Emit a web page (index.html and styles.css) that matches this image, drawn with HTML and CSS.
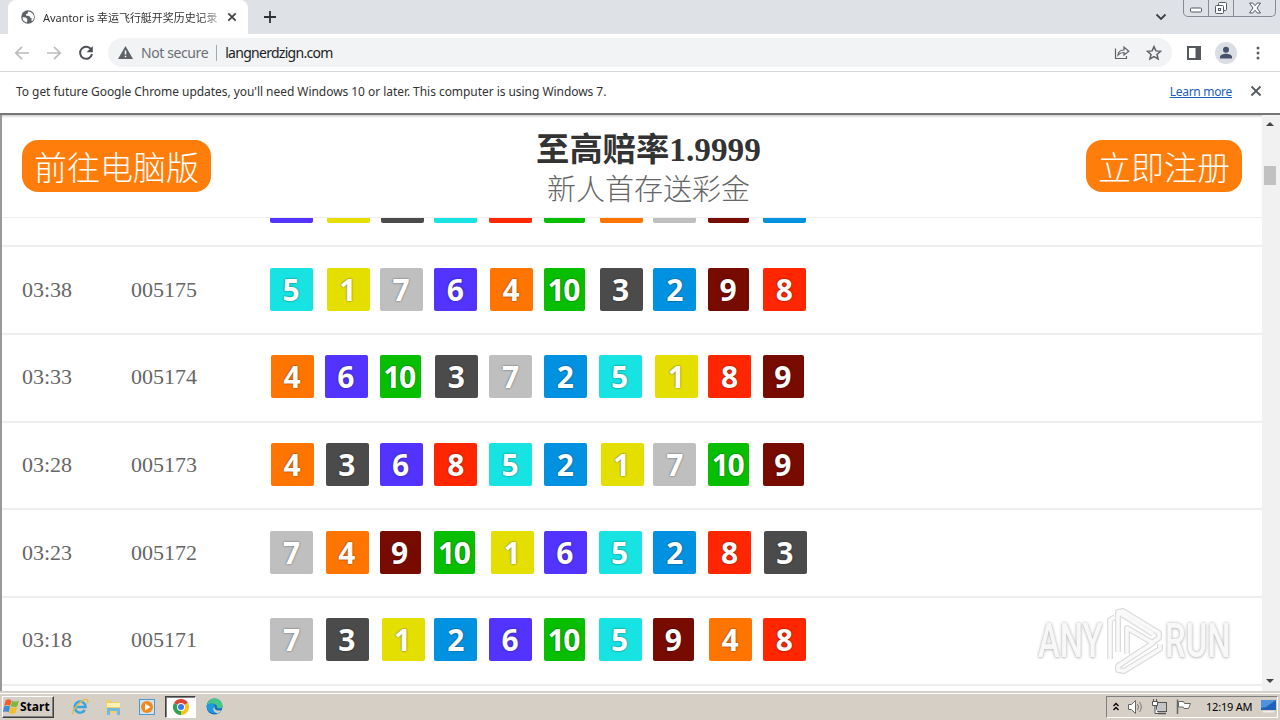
FILE: index.html
```html
<!DOCTYPE html>
<html lang="zh">
<head>
	<meta charset="UTF-8">
	<title>Avantor is 幸运飞行艇开奖历史记录</title>
	<link rel="stylesheet" href="styles.css">
</head>
<body>
	<div class="tabstrip">
		<div class="tab">
			<svg class="globe" width="14" height="14" viewBox="0 0 14 14"><circle cx="7" cy="7" r="6.8" fill="#5f6368"/><path d="M1.5 7.2l3.3.3 1.6 1.7-.5 3.3A5.6 5.6 0 0 1 1.5 7.2zM7 1.6l-.2 1.8-1.9.8.4 1.6 3 .2 1.1 1.8 1.2.2-.2 2.7 1.2.2A5.7 5.7 0 0 0 9.3 1.9z" fill="#fff"/></svg>
			<span class="tab-title">Avantor is 幸运飞行艇开奖历史记录</span>
			<svg width="10" height="10" viewBox="0 0 10 10"><path d="M1.3 1.3l7.4 7.4M8.7 1.3l-7.4 7.4" stroke="#3c4043" stroke-width="1.7"/></svg>
		</div>
		<svg class="plus" width="14" height="14" viewBox="0 0 14 14"><path d="M7 1v12M1 7h12" stroke="#2d3034" stroke-width="1.8"/></svg>
		<svg class="chevron" width="12" height="8" viewBox="0 0 12 8"><path d="M1.5 1.5L6 6l4.5-4.5" fill="none" stroke="#3c4043" stroke-width="1.8"/></svg>
		<div class="window-buttons">
			<span class="wb wb-min"><svg width="14" height="6" viewBox="0 0 14 6"><rect x="1.5" y="1" width="11" height="4" rx="1" fill="#fff" stroke="#555a66"/></svg></span>
			<span class="wb wb-max"><svg width="14" height="14" viewBox="0 0 14 14"><rect x="4.5" y="1.5" width="8" height="8" rx="1" fill="#fff" stroke="#555a66"/><rect x="1.5" y="4.5" width="8" height="8" rx="1" fill="#fff" stroke="#555a66"/><rect x="4.5" y="7.5" width="2" height="2" fill="none" stroke="#555a66"/></svg></span>
			<span class="wb wb-close"><svg width="14" height="12" viewBox="0 0 14 12"><path d="M1.5 1h3.2L7 3.7 9.3 1h3.2L9 6l3.5 5H9.3L7 8.3 4.700 11H1.500L5 6z" fill="#fff" stroke="#555a66"/></svg></span>
		</div>
	</div>

	<div class="toolbar">
		<svg class="nav-icon" width="16" height="16" viewBox="0 0 16 16"><path d="M15 8H2M8 1.800L1.800 8 8 14.200" fill="none" stroke="#babcbe" stroke-width="1.7"/></svg>
		<svg class="nav-icon" width="16" height="16" viewBox="0 0 16 16"><path d="M1 8h13M8 1.800L14.200 8 8 14.200" fill="none" stroke="#babcbe" stroke-width="1.7"/></svg>
		<svg class="nav-icon" width="16" height="16" viewBox="0 0 16 16"><path d="M13.300 4.800A6 6 0 1 0 14 9" fill="none" stroke="#4d5156" stroke-width="2"/><path d="M14.800 1v6.200H8.600z" fill="#4d5156"/></svg>
		<div class="omnibox">
			<svg width="15" height="13" viewBox="0 0 15 13"><path d="M7.500 0L15 13H0z" fill="#5f6368"/><path d="M7.500 4.500v4M7.500 9.700v1.500" stroke="#fff" stroke-width="1.5"/></svg>
			<span class="not-secure">Not secure</span>
			<span class="divider"></span>
			<span class="url">langnerdzign.com</span>
			<svg class="share" width="16" height="15" viewBox="0 0 16 15"><path d="M1.500 3.500v10h11V11" fill="none" stroke="#5f6368" stroke-width="1.2"/><path d="M4 10c.5-3.600 2.500-5 6-5V2l4.800 4.200L10 10V7.500C7.300 7.500 5.500 8.300 4 10z" fill="none" stroke="#5f6368" stroke-width="1.2"/></svg>
			<svg class="star" width="16" height="16" viewBox="0 0 16 16"><path d="M8 1.600l1.900 4.300 4.700.4-3.600 3.100 1.100 4.600L8 11.600 3.900 14 5 9.400 1.400 6.300l4.700-.4z" fill="none" stroke="#5f6368" stroke-width="1.5"/></svg>
		</div>
		<svg class="panel-icon" width="14" height="14" viewBox="0 0 14 14"><path d="M0 0h14v14H0zM2 2v10h6.500V2z" fill="#55595e" fill-rule="evenodd"/></svg>
		<svg class="avatar" width="22" height="22" viewBox="0 0 22 22"><circle cx="11" cy="11" r="11" fill="#dadde4"/><circle cx="11" cy="7.800" r="3" fill="#46516b"/><path d="M5 16.500v-1.700c0-2 3.500-3 6-3s6 1 6 3v1.700z" fill="#46516b"/></svg>
		<svg class="dots" width="4" height="14" viewBox="0 0 4 14"><circle cx="2" cy="2" r="1.5" fill="#5f6368"/><circle cx="2" cy="7" r="1.5" fill="#5f6368"/><circle cx="2" cy="12" r="1.5" fill="#5f6368"/></svg>
	</div>

	<div class="infobar">
		<span class="info-text">To get future Google Chrome updates, you'll need Windows 10 or later. This computer is using Windows 7.</span>
		<a class="learn">Learn more</a>
		<svg width="12" height="12" viewBox="0 0 12 12"><path d="M1.500 1.500l9 9M10.500 1.500l-9 9" stroke="#55595e" stroke-width="1.8"/></svg>
	</div>

	<div class="viewport">
		<div class="page">
			<div class="header">
				<a class="btn btn-pc">前往电脑版</a>
				<div class="slogan">
					<strong>至高赔率1.9999</strong>
					<span>新人首存送彩金</span>
				</div>
				<a class="btn btn-reg">立即注册</a>
			</div>
			<div class="results" id="results"></div>
			<div class="watermark">
				<span class="wm-text">ANY</span>
				<svg width="60" height="68" viewBox="0 0 60 68"><g fill="none" stroke-linejoin="round"><path class="wm-edge" d="M5 52V13l5-3M13 45V5l5-1 36 22v5l-6 4M13 5l35 22M22 47V21l26 15L13 59v4l6 1 36-22v-5"/><path class="wm-fill" d="M5 52V13l5-3M13 45V5l5-1 36 22v5l-6 4M13 5l35 22M22 47V21l26 15L13 59v4l6 1 36-22v-5"/></g></svg>
				<span class="wm-text">RUN</span>
			</div>
		</div>
		<div class="scrollbar">
			<span class="arrow arrow-up"></span>
			<span class="thumb"></span>
			<span class="arrow arrow-down"></span>
		</div>
	</div>

	<div class="taskbar">
		<div class="start">
			<svg width="17" height="17" viewBox="0 0 16 16"><path d="M2.500 2.200c2-1.600 3.500-1.400 5.500.1L6.800 7.500C5 6.300 3.200 6.200 1.100 7.500z" fill="#ee6030"/><path d="M8.500 2.700c2 1 4.200 1 6.500-.4l-1.500 5.400c-2 1.200-4.200 1.100-6.200.1z" fill="#7fb83b"/><path d="M1 8c2-1 3.800-1 5.700 0l-1.400 5.500c-1.700-1.100-3.700-1.300-5.300 0z" fill="#3f8bd5"/><path d="M7.200 8.400c2 1 4.200 1 6.200 0l-1.500 5.400c-2 1.200-4.200 1.200-6.100.1z" fill="#f5bd28"/></svg>
			<span>Start</span>
		</div>
		<div class="task"><svg width="18" height="18" viewBox="0 0 18 18"><path d="M13.800 12a5.500 5.500 0 1 1 .8-3H5" fill="none" stroke="#3ba4e0" stroke-width="2.5"/><path d="M2 16C-1 13 13-1 16.500 2c.8.700.5 2-.3 3.500" fill="none" stroke="#e6bd3c" stroke-width="1.3"/></svg></div>
		<div class="task"><svg width="18" height="18" viewBox="0 0 18 18"><path d="M2 2h5l1 2h8v11H2z" fill="#edcf6c"/><path d="M3 5h13v4H3z" fill="#fff2b4"/><path d="M3 17v-7h13v7h-3v-4H6v4z" fill="#75b9df"/></svg></div>
		<div class="task"><svg width="18" height="18" viewBox="0 0 18 18"><rect x="1.500" y="1.500" width="15" height="15" fill="#cfe4f3" stroke="#4c9ad0"/><circle cx="9" cy="9" r="6" fill="#f18a1b"/><path d="M7 5.500L12.500 9 7 12.500z" fill="#fff"/></svg></div>
		<div class="task active"><svg width="16" height="16" viewBox="0 0 16 16"><path d="M8 8L1.070 4A8 8 0 0 1 14.930 4z" fill="#df4535"/><path d="M8 8l6.930-4A8 8 0 0 1 8 16z" fill="#f9c31c"/><path d="M8 8v8A8 8 0 0 1 1.070 4z" fill="#2fa354"/><circle cx="8" cy="8" r="4" fill="#fff"/><circle cx="8" cy="8" r="3" fill="#3c78e6"/></svg></div>
		<div class="task"><svg width="17" height="17" viewBox="0 0 17 17"><circle cx="8.500" cy="8.500" r="8" fill="#1272bd"/><path d="M1 7C2 2 6 .5 9 .5c5 0 7.500 4 7.500 7 0 3-3 3.500-5.500 2.500C12 7 8 4 1 7z" fill="#46c68b"/><path d="M.8 8C3 4.500 7 4.500 9 7c-3 1-3 6 2 7.500-5 2-10-1-10.200-6.500z" fill="#1b9bdc"/><path d="M9 7.500c-2 3 1 6 6.500 4.800-1 1.700-2.500 2.700-4 3.200C7 14 6 10 9 7.500z" fill="#d6cfc6"/></svg></div>
		<div class="tray">
			<svg class="tray-up" width="8" height="10" viewBox="0 0 8 10"><path d="M1.500 4L4 1.500 6.500 4M1.500 8L4 5.500 6.500 8" fill="none" stroke="#000" stroke-width="1.3"/></svg>
			<svg width="17" height="16" viewBox="0 0 17 16"><path d="M1.500 5.500h3l4-4v13l-4-4h-3z" fill="#fff" stroke="#666"/><path d="M10.500 5q2 3 0 6M12.500 3q3.500 5 0 10" fill="none" stroke="#777"/></svg>
			<svg width="17" height="16" viewBox="0 0 17 16"><rect x="5.500" y="3.500" width="10" height="9" fill="#c5c5c5" stroke="#555"/><path d="M7 14.500h8" stroke="#555" stroke-width="1.5"/><path d="M1.500 2.500h5v4h-5zM2.500 0v2M5.500 0v2M4 7v7.500h3" fill="#fff" stroke="#555"/></svg>
			<svg width="17" height="16" viewBox="0 0 17 16"><path d="M2.500 15V.5" stroke="#666" stroke-width="1.5"/><path d="M3.500 2.500h5l1 2h6l-2 5H9l-1-1.500H3.500z" fill="#fff" stroke="#666"/></svg>
			<span class="clock">12:19 AM</span>
			<svg width="15" height="13" viewBox="0 0 15 13"><path d="M0 0h15v10H0z" fill="#1d62b8"/><path d="M0 0h15L5 7 0 8z" fill="#4f91dc"/><path d="M2 11h11v1.500H2z" fill="#eee"/></svg>
		</div>
	</div>

	<script>
		// first draw is scrolled under the header, only the bottom edge of its balls is visible
		var draws = [
			["", "", [6, 1, 3, 5, 8, 10, 4, 7, 9, 2]],
			["03:38", "005175", [5, 1, 7, 6, 4, 10, 3, 2, 9, 8]],
			["03:33", "005174", [4, 6, 10, 3, 7, 2, 5, 1, 8, 9]],
			["03:28", "005173", [4, 3, 6, 8, 5, 2, 1, 7, 10, 9]],
			["03:23", "005172", [7, 4, 9, 10, 1, 6, 5, 2, 8, 3]],
			["03:18", "005171", [7, 3, 1, 2, 6, 10, 5, 9, 4, 8]]
		];

		var html = "";
		for (var i = 0; i < draws.length; i++) {
			html += '<div class="row"><span class="time">' + draws[i][0] + '</span><span class="issue">' + draws[i][1] + '</span><div class="balls">';
			for (var j = 0; j < 10; j++) {
				var n = draws[i][2][j];
				html += '<span class="slot"><b class="ball n' + n + '">' + (i > 0 ? n : "") + '</b></span>';
			}
			html += '</div></div>';
		}
		document.getElementById("results").innerHTML = html;
	</script>
</body>
</html>
```
FILE: styles.css
```css
* {
	box-sizing: border-box;
}
body {
	display: flex;
	flex-direction: column;
	width: 1280px;
	height: 720px;
	margin: 0;
	overflow: hidden;
	background: #fff;
	font-family: "Noto Sans", "Noto Sans CJK SC", sans-serif;
	font-size: 12px;
	color: #333;
}
svg {
	display: block;
	flex: none;
}
span, a {
	white-space: nowrap;
}

/* browser */
.tabstrip {
	display: flex;
	height: 34px;
	background: #dee1e6;
}
.tab {
	display: flex;
	align-items: center;
	width: 240px;
	margin-left: 8px;
	padding: 0 11px 0 13px;
	background: #fff;
	border-radius: 8px 8px 0 0;
}
.tab-title {
	width: 175px;
	margin: 0 9px 0 8px;
	font-size: 11px;
	letter-spacing: -0.05px;
	-webkit-mask-image: linear-gradient(to right, #000 90%, rgba(0, 0, 0, 0.3));
	mask-image: linear-gradient(to right, #000 90%, rgba(0, 0, 0, 0.3));
}
.plus {
	margin: 10px 0 0 15px;
}
.chevron {
	margin: 13px 16px 0 auto;
}
.window-buttons {
	display: flex;
	width: 93px;
	height: 17px;
	margin-right: 4px;
	border: 1px solid #878b95;
	border-top: 0;
	border-radius: 0 0 5px 5px;
}
.wb {
	display: flex;
	align-items: center;
	justify-content: center;
	width: 25px;
	border-right: 1px solid #878b95;
}
.wb-min {
	padding-top: 4px;
}
.wb-close {
	flex: 1;
	border: 0;
}
.toolbar {
	display: flex;
	align-items: center;
	height: 38px;
	padding-left: 14px;
	border-bottom: 1px solid #d5d7da;
}
.nav-icon {
	margin-right: 16px;
}
.omnibox {
	display: flex;
	align-items: center;
	width: 1064px;
	height: 29px;
	margin-left: -2px;
	padding: 0 10px 0 10px;
	background: #f1f3f4;
	border-radius: 15px;
	font-size: 14px;
}
.not-secure {
	margin-left: 8px;
	color: #6b6f74;
	letter-spacing: -0.4px;
}
.divider {
	width: 1px;
	height: 16px;
	margin: 0 8px;
	background: #a5a8ab;
}
.url {
	color: #202124;
	letter-spacing: -0.72px;
}
.share {
	margin-left: auto;
}
.star {
	margin-left: 16px;
}
.panel-icon {
	margin-left: 15px;
}
.avatar {
	margin-left: 14px;
}
.dots {
	margin-left: 19px;
}
.infobar {
	display: flex;
	align-items: center;
	height: 43px;
	padding: 0 18px 3px 16px;
	border-bottom: 2px solid #767676;
}
.info-text {
	letter-spacing: -0.05px;
}
.learn {
	margin: 0 18px 0 auto;
	color: #1a60ba;
	letter-spacing: -0.3px;
	text-decoration: underline;
}

/* page */
.viewport {
	display: flex;
	height: 576px;
	border-left: 2px solid #999;
}
.page {
	position: relative;
	width: 1260px;
	overflow: hidden;
}
.header {
	display: flex;
	align-items: flex-start;
	justify-content: space-between;
	height: 103px;
	padding: 25px 20px 0;
	border-bottom: 1px solid #eee;
	box-shadow: inset 0 3px 3px -2px #bbb;
}
.btn {
	height: 52px;
	padding: 0 12px;
	background: #ff7e0b;
	border-radius: 16px;
	color: #fff;
	font-family: "Noto Sans CJK SC", sans-serif;
	font-size: 33px;
	font-weight: 300;
	line-height: 52px;
}
.slogan {
	display: flex;
	flex-direction: column;
	align-items: center;
	margin-top: -11px;
	font-family: "Liberation Serif", "Noto Sans CJK SC", serif;
}
.slogan strong {
	font-size: 33.3px;
	line-height: 42px;
}
.slogan span {
	color: #666;
	font-size: 29px;
	font-weight: 300;
	line-height: 38px;
}
.results {
	height: 473px;
	overflow: hidden;
}
.row {
	display: flex;
	align-items: center;
	height: 87.7px;
	padding: 0 0 1px 20px;
	border-bottom: 2px solid #eee;
	color: #666;
	font-family: "Liberation Serif", serif;
	font-size: 22px;
}
.row:first-child {
	margin-top: -58.5px;
}
.time {
	width: 109px;
}
.issue {
	width: 139px;
}
.balls {
	display: flex;
	margin-top: -1px;
}
.slot {
	width: 54.75px;
}
.ball {
	display: block;
	width: 43px;
	height: 43px;
	border-radius: 2px;
	color: #fff;
	font-family: "Open Sans", sans-serif;
	font-size: 30px;
	line-height: 43px;
	text-align: center;
	text-shadow: 0 0 2px rgba(0, 0, 0, 0.6);
}
.n1 { margin-left: 2px; background: #e5df00; }
.n2 { background: #0092e0; }
.n3 { margin-left: 1px; background: #4b4b4b; }
.n4 { margin-left: 1px; background: #ff7500; }
.n5 { background: #17e3e3; }
.n6 { background: #5233ff; }
.n7 { background: #bfbfbf; }
.n8 { background: #ff2600; }
.n9 { width: 41px; background: #780b00; }
.n10 { width: 41px; padding-right: 2px; background: #07bf00; letter-spacing: -1.5px; }
.n1, .n3, .n4, .n5, .n6, .n9 {
	padding-right: 1px;
}
.watermark {
	position: absolute;
	right: 28px;
	bottom: 16px;
	display: flex;
	align-items: center;
	width: 196px;
}
.wm-text {
	width: 67px;
	color: #f8f8f8;
	font-family: Roboto, sans-serif;
	font-size: 49px;
	font-weight: 500;
	line-height: 68px;
	text-shadow: 0 0 4px #bbb, 0 1px 3px #ccc;
	transform: scaleX(0.67);
	transform-origin: left;
}
.wm-edge {
	stroke: #dcdcdc;
	stroke-width: 6;
}
.wm-fill {
	stroke: #f9f9f9;
	stroke-width: 3.5;
}
.scrollbar {
	display: flex;
	flex-direction: column;
	align-items: center;
	width: 18px;
	padding: 7px 2px 8px 0;
	background: #f1f1f1;
}
.arrow {
	border: 4px solid transparent;
}
.arrow-up {
	border-top: 0;
	border-bottom-color: #444;
}
.arrow-down {
	margin-top: auto;
	border-bottom: 0;
	border-top-color: #444;
}
.thumb {
	width: 12px;
	height: 19px;
	margin-top: 40px;
	background: #c1c1c1;
}

/* taskbar */
.taskbar {
	display: flex;
	align-items: center;
	height: 29px;
	padding: 0 2px;
	background: #d6cfc6;
	border-top: 2px solid #d6cfc6;
	box-shadow: inset 0 1px 0 #fff;
	color: #000;
}
.start {
	display: flex;
	align-items: center;
	width: 52px;
	height: 22px;
	margin-right: 10px;
	border: 1px solid;
	border-color: #fff #404040 #404040 #fff;
	box-shadow: inset -1px -1px 0 #808080;
	font-family: "Open Sans", sans-serif;
	font-weight: bold;
}
.task {
	display: flex;
	align-items: center;
	justify-content: center;
	width: 31px;
	height: 22px;
	margin-right: 2.7px;
}
.active {
	background: #fff;
	border: 1px solid;
	border-color: #404040 #fff #fff #404040;
	box-shadow: inset 1px 1px 0 #808080;
}
.tray {
	display: flex;
	align-items: center;
	gap: 7px;
	width: 172px;
	height: 22px;
	margin-left: auto;
	padding-left: 5px;
	border: 1px solid;
	border-color: #808080 #fff #fff #808080;
}
.clock {
	width: 48px;
	margin: 0 0 0 7px;
	font-size: 11px;
	letter-spacing: -0.2px;
}
```
